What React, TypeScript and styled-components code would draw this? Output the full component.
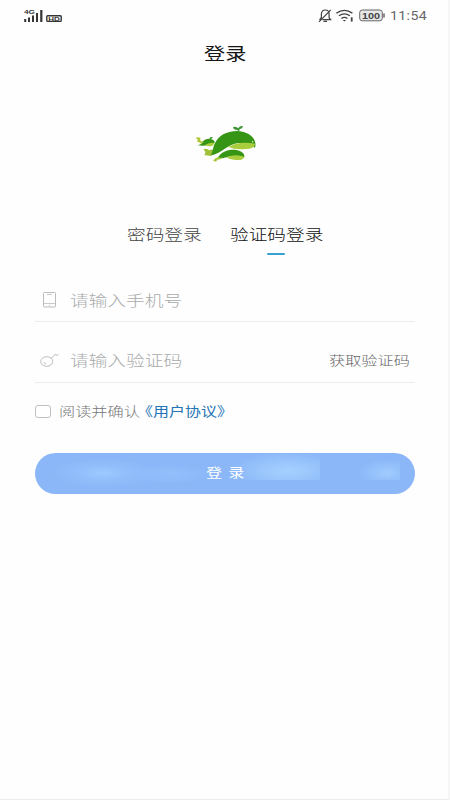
import React, { useState } from 'react';
import styled, { createGlobalStyle } from 'styled-components';

const GlobalStyle = createGlobalStyle`
  * { box-sizing: border-box; }
  body { margin: 0; background: #fefefe; }
  button { border: 0; padding: 0; background: none; font: inherit; color: inherit; text-align: left; }
`;

const Screen = styled.main`
  width: 450px;
  height: 800px;
  overflow: hidden;
  display: flex;
  flex-direction: column;
  background: #fefefe;
  border-right: 2px solid #f6f6f7;
  border-bottom: 1px solid #ececec;
  font-family: 'Noto Sans CJK SC', sans-serif;
  font-weight: 300;
`;

/* Wide lettering: the box reserves the final width, the glyphs are widened inside it. */
const Wide = styled.span<{ $size: number; $width: number; $ratio?: number }>`
  display: block;
  width: ${(p) => p.$width}px;
  font-size: ${(p) => p.$size}px;
  line-height: 24px;
  white-space: nowrap;
  transform: scaleX(${(p) => p.$ratio ?? 1.245});
  transform-origin: left center;
`;

const StatusBar = styled.header`
  height: 32px;
  flex: none;
  padding: 0 20px 0 23px;
  display: flex;
  align-items: center;
  justify-content: space-between;
  color: #4c4c4c;
`;

const StatusGroup = styled.div`
  display: flex;
  align-items: center;
  height: 32px;
`;

const Clock = styled.span`
  display: block;
  width: 38px;
  margin-left: 4px;
  font: 400 12px/16px Roboto, sans-serif;
  letter-spacing: 0.3px;
  color: #666;
  transform: scaleX(1.18);
  transform-origin: left center;
  white-space: nowrap;
`;

const TitleBar = styled.h1`
  margin: 0;
  height: 42px;
  flex: none;
  display: flex;
  align-items: center;
  padding-left: 204px;
  color: #151515;
  font-weight: 400;
`;

const Logo = styled.svg`
  flex: none;
  width: 80px;
  height: 55px;
  margin: 41px 0 0 185px;
`;

const Tabs = styled.nav`
  display: flex;
  flex: none;
  gap: 28px;
  height: 35px;
  margin: 52px 0 0 127px;
`;

const Tab = styled.button<{ $active: boolean }>`
  display: flex;
  flex-direction: column;
  align-items: center;
  color: ${(p) => (p.$active ? '#101010' : '#444')};

  &::after {
    content: '';
    width: 18px;
    height: 2px;
    margin-top: 7px;
    border-radius: 1px;
    background: ${(p) => (p.$active ? '#39a1d0' : 'transparent')};
  }
`;

const Form = styled.form`
  display: flex;
  flex-direction: column;
  flex: none;
  padding: 21px 33px 0 35px;
`;

const Field = styled.div<{ $height: number; $lift: number }>`
  display: flex;
  align-items: flex-end;
  height: ${(p) => p.$height}px;
  padding: 0 4px ${(p) => p.$lift}px 5px;
  border-bottom: 1px solid #ededed;
  color: #a9abab;
`;

const FieldIcon = styled.svg`
  width: 20px;
  height: 24px;
  margin-right: 10px;
  fill: none;
  stroke: #bcbcbc;
`;

const SendCode = styled.button`
  margin-left: auto;
  color: #666;
`;

const Agreement = styled.div`
  display: flex;
  align-items: center;
  height: 24px;
  margin-top: 16px;
  color: #777;
`;

const Checkbox = styled.button<{ $checked: boolean }>`
  width: 16px;
  height: 13px;
  margin-right: 8px;
  border: 1px solid #c0c0c0;
  border-radius: 3px;
  background: ${(p) => (p.$checked ? '#39a1d0' : '#fff')};
`;

const PolicyLink = styled.button`
  color: #2475b5;
  font-weight: 400;
  margin-left: -4px;
`;

const Submit = styled.button`
  display: flex;
  align-items: center;
  height: 41px;
  margin-top: 30px;
  width: 380px;
  padding: 0 0 3px 171px;
  border-radius: 21px;
  color: #fff;
  font-weight: 400;
  background:
    radial-gradient(ellipse 52px 15px at 68px 20px, #9dcaff 0%, #9dcaff66 45%, transparent 100%),
    radial-gradient(ellipse 56px 19px at 252px 18px, #a4d0ff 0%, #a4d0ff99 45%, transparent 100%) 0 0 / 285px 27px no-repeat,
    radial-gradient(ellipse 30px 14px at 352px 20px, #a0ccff 0%, #a0ccff77 50%, transparent 100%) 0 0 / 365px 27px no-repeat,
    radial-gradient(ellipse 40px 10px at 135px 21px, #93c0fb 0%, transparent 100%),
    #8bb7f8;
`;

const SubmitLabel = styled(Wide)`
  word-spacing: 2px;
`;

function Signal() {
  return (
    <svg width="40" height="18" viewBox="0 0 40 18">
      <text x="1" y="7" fontFamily="Liberation Sans" fontWeight="700" fontSize="6" textLength="11" lengthAdjust="spacingAndGlyphs" fill="#333">4G</text>
      <g fill="#353535">
        <rect x="1.2" y="12" width="2" height="3" />
        <rect x="5" y="10.5" width="2" height="4.5" />
        <rect x="9" y="8.5" width="2" height="6.5" />
        <rect x="13" y="6" width="2" height="9" />
        <rect x="17.2" y="3" width="2.2" height="12" />
      </g>
      <rect x="23.8" y="8.8" width="14.4" height="5.6" rx="0.8" fill="#fff" stroke="#353535" strokeWidth="1.4" />
      <text x="25.2" y="13.8" fontFamily="Liberation Sans" fontWeight="700" fontSize="6" textLength="11.6" lengthAdjust="spacingAndGlyphs" fill="#353535">HD</text>
    </svg>
  );
}

function DeviceStatus() {
  return (
    <svg width="69" height="18" viewBox="0 0 69 18" fill="none" stroke="#424242">
      <path d="M2.5 12.8 4.4 10.5V6.8C4.7 4.2 6.3 3 8.4 3c2.3 0 3.7 1.7 3.7 4v3.7l1.5 2H5.5M6.5 14.4h3.6M2 14.8 13.8 2.8" strokeWidth="1.2" />
      <path d="M19.4 6.1q8-5.6 16 0M21.9 8.8q5.5-3.8 11 0M24.4 11.4q3-2.2 6 0" strokeWidth="1.3" />
      <path d="m25.7 13 1.7 1.5 1.7-1.5z" fill="#424242" stroke="none" />
      <path d="M34.7 10.3v4.3" strokeWidth="1.8" />
      <rect x="42.7" y="3" width="22.6" height="10.8" rx="2.5" fill="#e7e7e7" stroke="#666" />
      <path d="M67 6.5v4" strokeWidth="1.5" stroke="#666" />
      <text x="45" y="12" fontFamily="Liberation Sans" fontWeight="700" fontSize="9" textLength="18" lengthAdjust="spacingAndGlyphs" fill="#444" stroke="none">100</text>
    </svg>
  );
}

function WhaleLogo() {
  return (
    <Logo viewBox="0 0 240 165">
      <path d="M55 103Q64 98 74 106Q80 101 88 106Q84 119 76 123Q67 120 58 121Q63 114 60 109Z" fill="#a0c03a" />
      <path d="M76 122C85 112 82 94 94 77C110 53 146 43 176 51C202 58 216 78 210 98Q190 84 160 84C130 86 110 116 76 122Z" fill="#379516" />
      <path d="M130 96Q160 77 210 86Q211 101 181 102Q152 105 130 96Z" fill="#a9cd3d" />
      <circle cx="203" cy="80" r="2.2" fill="#eff6df" />
      <path d="M160 48Q158 44 151 44Q144 43 144 36Q154 33 160 40Q163 32 174 33Q172 42 164 42L163 48Z" fill="#3e9637" />
      <path d="M98 129C109 109 133 102 154 105C171 108 180 117 178 127Q145 119 124 127Q110 132 98 129Z" fill="#379516" />
      <path d="M124 127Q151 115 178 125Q176 135 158 135Q138 137 124 127Z" fill="#a9cd3d" />
      <path d="M84 137Q91 128 99 127L112 128Q105 135 97 134L93 140Z" fill="#a6c83b" />
      <path d="M39 91Q50 88 53 80C61 69 82 68 89 80Q89 87 77 86Q64 95 39 91Z" fill="#379516" />
      <path d="M59 91Q72 80 88 84Q86 95 69 94Z" fill="#a9cd3d" />
      <path d="M32 69Q37 64 47 69L45 76Q48 80 56 80L50 86L39 80L35 79L39 74Z" fill="#b2c737" />
      <path d="M74 72Q72 67 77 66L84 66L79 72Z" fill="#4b9c36" />
    </Logo>
  );
}

export default function App() {
  const [mode, setMode] = useState<'password' | 'code'>('code');
  const [agreed, setAgreed] = useState(false);

  return (
    <>
      <GlobalStyle />
      <Screen>
        <StatusBar>
          <StatusGroup><Signal /></StatusGroup>
          <StatusGroup><DeviceStatus /><Clock>11:54</Clock></StatusGroup>
        </StatusBar>
        <TitleBar><Wide $size={17} $width={42}>登录</Wide></TitleBar>
        <WhaleLogo />
        <Tabs>
          <Tab $active={mode === 'password'} onClick={() => setMode('password')}>
            <Wide $size={15} $width={75}>密码登录</Wide>
          </Tab>
          <Tab $active={mode === 'code'} onClick={() => setMode('code')}>
            <Wide $size={15} $width={92}>验证码登录</Wide>
          </Tab>
        </Tabs>
        <Form onSubmit={(e) => e.preventDefault()}>
          <Field $height={44} $lift={9}>
            <FieldIcon viewBox="0 0 20 24">
              <rect x="3.5" y="4.5" width="12" height="14.5" rx="0.8" />
              <path d="M3.5 15.5h12M7 6.5h5M8.8 17.3h1.6" strokeWidth="0.8" />
            </FieldIcon>
            <Wide $size={15} $width={112}>请输入手机号</Wide>
          </Field>
          <Field $height={61} $lift={10}>
            <FieldIcon viewBox="0 0 20 24">
              <ellipse cx="6.7" cy="13.5" rx="6" ry="4.8" />
              <path d="M11 10.3 15 6.5l2 .9 1.5-1M4 14.5q.5 1.5 2 1.5" />
            </FieldIcon>
            <Wide $size={15} $width={112}>请输入验证码</Wide>
            <SendCode type="button"><Wide $size={13} $width={82}>获取验证码</Wide></SendCode>
          </Field>
          <Agreement>
            <Checkbox type="button" role="checkbox" aria-checked={agreed} $checked={agreed} onClick={() => setAgreed(!agreed)} />
            <Wide $size={13} $width={82}>阅读并确认</Wide>
            <PolicyLink type="button"><Wide $size={13} $width={98} $ratio={1.23}>《用户协议》</Wide></PolicyLink>
          </Agreement>
          <Submit type="submit"><SubmitLabel $size={13} $width={40}>登 录</SubmitLabel></Submit>
        </Form>
      </Screen>
    </>
  );
}
